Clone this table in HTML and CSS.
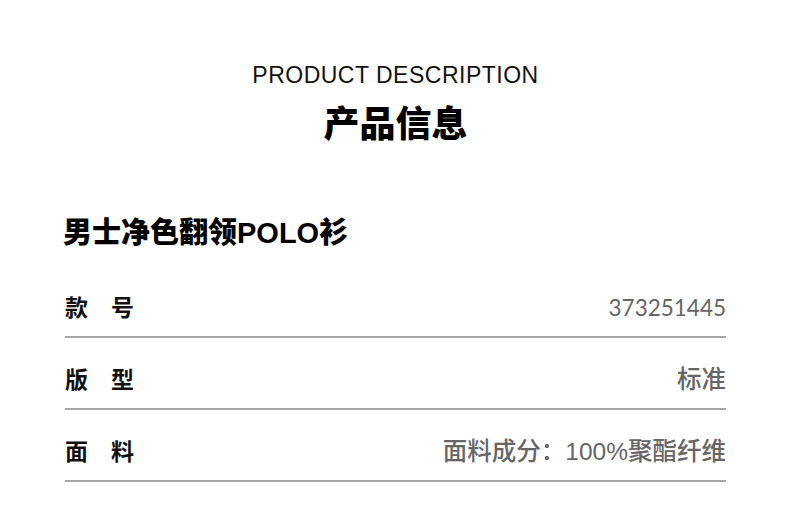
FILE: index.html
```html
<!DOCTYPE html>
<html lang="zh-CN">
<head>
<meta charset="utf-8">
<title>产品信息</title>
<link rel="stylesheet" href="styles.css">
</head>
<body>
<div class="page">
  <header class="head">
    <div class="en">PRODUCT DESCRIPTION</div>
    <h1 class="cn">产品信息</h1>
  </header>
  <h2 class="title">男士净色翻领POLO衫</h2>
  <div class="rows">
    <div class="row"><span class="label">款　号</span><span class="value num">373251445</span></div>
    <div class="row"><span class="label">版　型</span><span class="value">标准</span></div>
    <div class="row"><span class="label">面　料</span><span class="value">面料成分：100%聚酯纤维</span></div>
  </div>
</div>
</body>
</html>
```
FILE: styles.css
```css
* { box-sizing: border-box; }
html, body { margin: 0; padding: 0; background: #fff; }
body {
  width: 790px;
  height: 507px;
  overflow: hidden;
  font-family: "Liberation Sans", "Noto Sans CJK SC", sans-serif;
  color: #000;
}
.page { padding: 60px 64px 0 65px; }
.head { display: flex; flex-direction: column; align-items: center; }
.en {
  font-size: 23px;
  line-height: 30px;
  letter-spacing: 0.5px;
  color: #111;
}
.cn {
  margin: 8px 0 0;
  font-size: 36px;
  line-height: 46px;
  font-weight: 900;
  font-family: "Noto Sans CJK SC", sans-serif;
}
.title {
  margin: 69px 0 0 -2px;
  font-size: 29px;
  line-height: 40px;
  font-weight: 900;
  font-family: "Liberation Sans", "Noto Sans CJK SC", sans-serif;
}
.rows { margin-top: 13px; }
.row {
  display: flex;
  justify-content: space-between;
  align-items: baseline;
  height: 72px;
  padding-top: 25px;
  border-bottom: 2px solid #a8a8a8;
}
.label, .value { line-height: 30px; }
.label {
  font-family: "Noto Sans CJK SC", sans-serif;
  font-size: 23px;
  font-weight: 700;
  color: #111;
}
.value {
  font-family: "Liberation Sans", "Noto Sans CJK SC", sans-serif;
  font-size: 24.5px;
  font-weight: 500;
  color: #666;
}
.value.num { font-family: "Lato", "Noto Sans CJK SC", sans-serif; font-size: 22.5px; font-weight: 400; }
```
